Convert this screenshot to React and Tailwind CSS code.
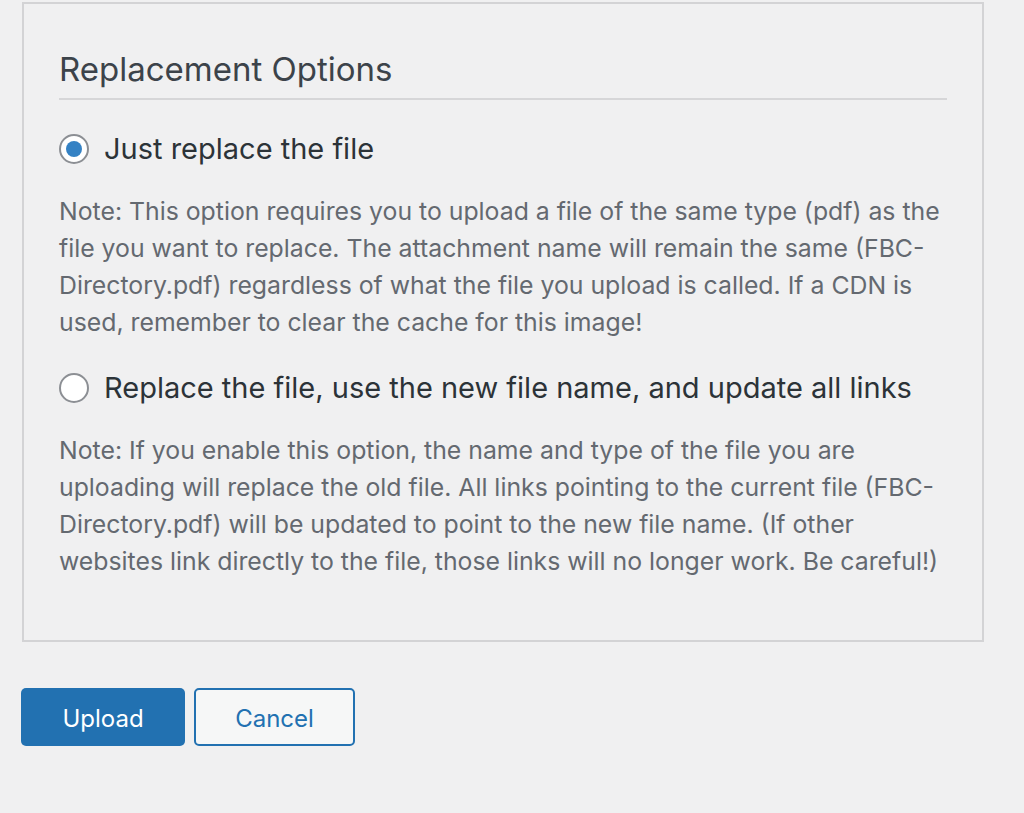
export default function App() {
  const font = { fontFamily: "Inter, 'Liberation Sans', sans-serif" };
  return (
    <div className="min-h-[813px] bg-[#f0f0f1] pt-[2px] pl-[22px]" style={font}>
      <div className="w-[962px] h-[640px] border-2 border-[#d3d3d5] px-[35px] pt-[45px]">
        <h2 className="text-[33px] leading-[40px] text-[#3c434a] font-normal pb-[9px] border-b-2 border-[#d6d6d8]">
          Replacement Options
        </h2>
        <label className="mt-[29px] flex items-center h-[40px]">
          <span className="w-[30px] h-[30px] rounded-full border-2 border-[#8c8f94] bg-white flex items-center justify-center shrink-0">
            <span className="w-[16px] h-[16px] rounded-full bg-[#3582c4]" />
          </span>
          <span className="ml-[15px] text-[29px] leading-[40px] text-[#2c3338]">Just replace the file</span>
        </label>
        <p className="mt-[24px] text-[24.8px] leading-[37px] text-[#646970]">
          Note: This option requires you to upload a file of the same type (pdf) as the file you want to replace. The attachment name will remain the same (FBC-Directory.pdf) regardless of what the file you upload is called. If a CDN is used, remember to clear the cache for this image!
        </p>
        <label className="mt-[27px] flex items-center h-[40px]">
          <span className="w-[30px] h-[30px] rounded-full border-2 border-[#8c8f94] bg-white shrink-0" />
          <span className="ml-[15px] text-[29px] leading-[40px] text-[#2c3338]">Replace the file, use the new file name, and update all links</span>
        </label>
        <p className="mt-[24px] text-[24.8px] leading-[37px] text-[#646970]">
          Note: If you enable this option, the name and type of the file you are uploading will replace the old file. All links pointing to the current file (FBC-Directory.pdf) will be updated to point to the new file name. (If other websites link directly to the file, those links will no longer work. Be careful!)
        </p>
      </div>
      <div className="mt-[46px] ml-[-1px] flex gap-[9px]">
        <button className="w-[164px] h-[58px] pt-[3px] rounded-[5px] bg-[#2271b1] text-white text-[24px]">Upload</button>
        <button className="w-[161px] h-[58px] pt-[3px] rounded-[5px] bg-[#f6f7f7] border-2 border-[#2271b1] text-[#2271b1] text-[24px]">Cancel</button>
      </div>
    </div>
  );
}
